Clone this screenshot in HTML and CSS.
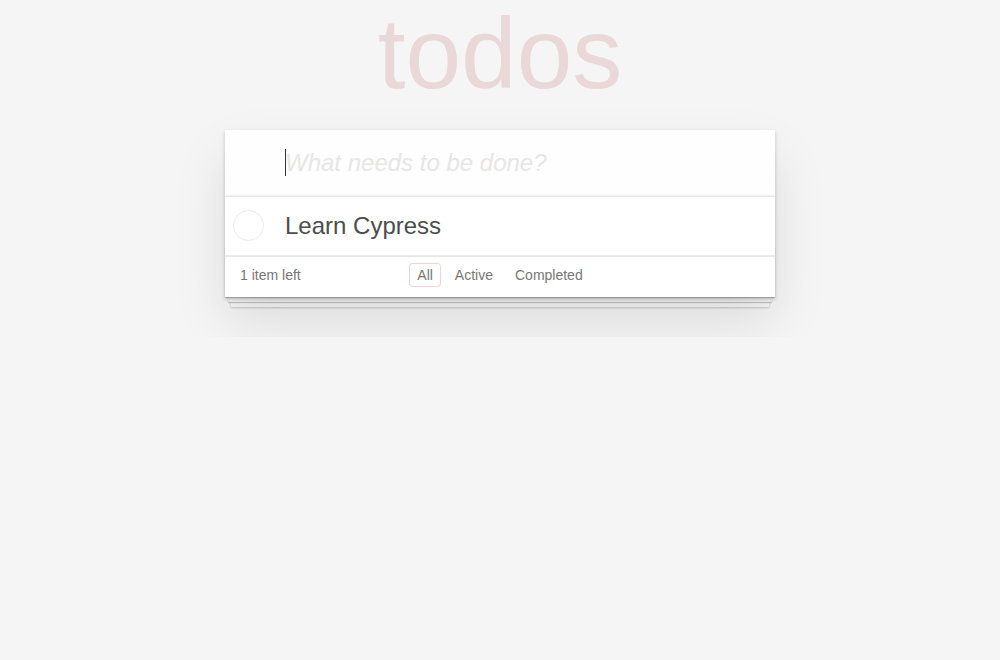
FILE: index.html
```html
<!DOCTYPE html>
<html lang="en">
<head>
<meta charset="utf-8">
<title>todos</title>
<link rel="stylesheet" href="styles.css">
</head>
<body>
<div class="page">
  <header class="header">
    <h1 class="title">todos</h1>
  </header>
  <section class="todoapp">
    <div class="new-wrap">
      <input class="new-todo" placeholder="What needs to be done?">
    </div>
    <section class="main">
      <ul class="todo-list">
        <li class="todo">
          <span class="toggle"></span>
          <label class="todo-label">Learn Cypress</label>
        </li>
      </ul>
    </section>
    <footer class="footer">
      <span class="todo-count"><strong>1</strong> item left</span>
      <ul class="filters">
        <li><a class="filter selected">All</a></li>
        <li><a class="filter">Active</a></li>
        <li><a class="filter">Completed</a></li>
      </ul>
      <span class="spacer"></span>
    </footer>
  </section>
</div>
</body>
</html>
```
FILE: styles.css
```css
html, body {
  margin: 0;
  padding: 0;
}
body {
  background: #f5f5f5;
  color: #4d4d4d;
  font-family: "Liberation Sans", Arial, Helvetica, sans-serif;
  font-size: 14px;
  line-height: 1.4em;
  -webkit-font-smoothing: antialiased;
}
.page {
  width: 550px;
  margin: 0 auto;
}
.header {
  height: 130px;
}
.title {
  margin: 0;
  font-size: 100px;
  line-height: 106px;
  font-weight: 100;
  text-align: center;
  color: rgba(175, 47, 47, 0.15);
}
.todoapp {
  position: relative;
  background: #fff;
  margin-bottom: 40px;
  box-shadow: 0 2px 4px 0 rgba(0, 0, 0, 0.2), 0 25px 50px 0 rgba(0, 0, 0, 0.1);
}
.new-wrap {
  position: relative;
}
.new-wrap::before {
  content: "";
  position: absolute;
  left: 60px;
  top: 19px;
  width: 1px;
  height: 27px;
  background: #333;
}
.new-todo {
  display: block;
  box-sizing: border-box;
  width: 100%;
  margin: 0;
  padding: 16px 16px 16px 60px;
  border: none;
  outline: none;
  background: rgba(0, 0, 0, 0.003);
  box-shadow: inset 0 -2px 1px rgba(0, 0, 0, 0.03);
  font-family: inherit;
  font-size: 24px;
  line-height: 1.4em;
  color: #4d4d4d;
  caret-color: transparent;
}
.new-todo::placeholder {
  font-style: italic;
  font-weight: 300;
  color: #e6e6e6;
}
.main {
  position: relative;
  z-index: 2;
  border-top: 1px solid #e6e6e6;
}
.todo-list {
  margin: 0;
  padding: 0;
  list-style: none;
}
.todo {
  display: flex;
  align-items: center;
  font-size: 24px;
  border-bottom: 1px solid #ededed;
}
.toggle {
  box-sizing: border-box;
  flex: none;
  width: 31px;
  height: 31px;
  margin-left: 8px;
  border: 1px solid #ededed;
  border-radius: 50%;
}
.todo-label {
  display: block;
  flex: 1;
  padding: 15px 60px 15px 15px;
  margin-left: 6px;
  line-height: 1.2;
  color: #4d4d4d;
  font-weight: 400;
}
.footer {
  position: relative;
  display: grid;
  grid-template-columns: 1fr auto 1fr;
  grid-template-rows: 20px;
  align-items: center;
  color: #777;
  padding: 8px 15px 12px;
  height: 20px;
  border-top: 1px solid #e6e6e6;
}
.footer::before {
  content: "";
  position: absolute;
  right: 0;
  bottom: 0;
  left: 0;
  height: 50px;
  overflow: hidden;
  z-index: -1;
  box-shadow: 0 1px 1px rgba(0, 0, 0, 0.2),
              0 8px 0 -3px #f6f6f6,
              0 9px 1px -3px rgba(0, 0, 0, 0.2),
              0 16px 0 -6px #f6f6f6,
              0 17px 2px -6px rgba(0, 0, 0, 0.2);
}
.todo-count {
  text-align: left;
  line-height: 20px;
}
.todo-count strong {
  font-weight: 400;
}
.filters {
  display: flex;
  align-items: center;
  height: 20px;
  margin: 0;
  padding: 0;
  list-style: none;
}
.filter {
  display: block;
  margin: -1px 3px 0;
  padding: 3px 7px;
  border: 1px solid transparent;
  border-radius: 3px;
  color: inherit;
  text-decoration: none;
  line-height: 16px;
}
.filter.selected {
  border-color: rgba(175, 47, 47, 0.2);
}
```
